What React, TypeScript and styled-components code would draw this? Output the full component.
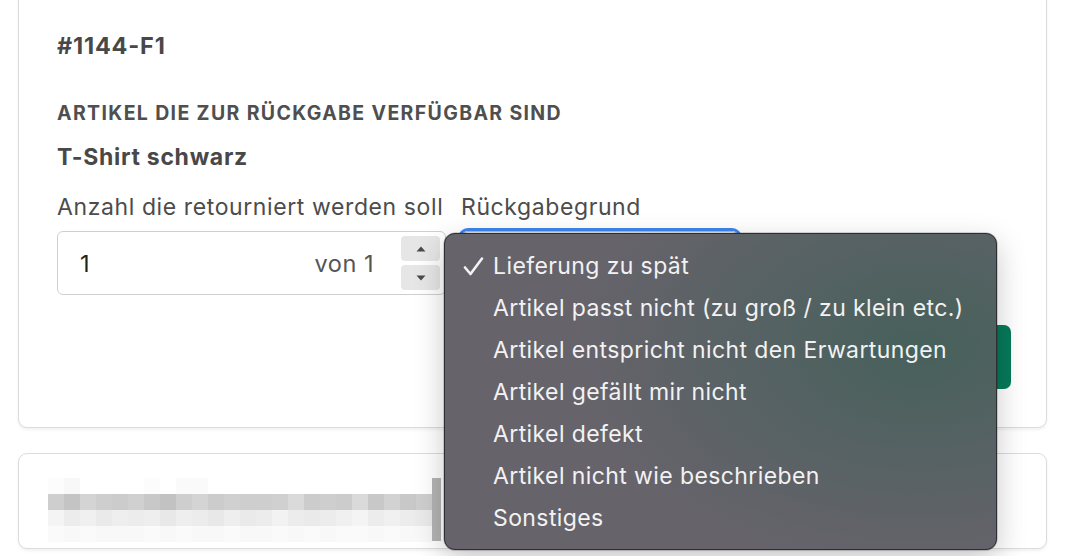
import React from "react";
import styled, { createGlobalStyle } from "styled-components";

const GlobalStyle = createGlobalStyle`
  html, body {
    margin: 0;
    padding: 0;
    background: #ffffff;
    overflow: hidden;
  }
  body {
    font-family: Inter, "Liberation Sans", Arial, sans-serif;
    color: #4a4a4a;
  }
`;

const Page = styled.div`
  width: 1090px;
  height: 568px;
  padding: 0 43px 0 18px;
  box-sizing: border-box;
  display: flex;
  flex-direction: column;
  gap: 25px;
  margin-top: -12px;
`;

const Card = styled.section`
  background: #ffffff;
  border: 1px solid #dcdcdc;
  border-radius: 9px;
  box-shadow: 0 2px 3px rgba(0, 0, 0, 0.06);
`;

const ReturnCard = styled(Card)`
  padding: 39px 35px 38px 38px;
`;

const OrderNumber = styled.h2`
  margin: 0;
  font-size: 23.5px;
  font-weight: 700;
  letter-spacing: 0.8px;
  color: #484848;
  line-height: 36px;
`;

const SectionTitle = styled.h3`
  margin: 37px 0 0;
  font-size: 19.5px;
  font-weight: 700;
  letter-spacing: 1.35px;
  text-transform: uppercase;
  color: #4f4f4f;
  line-height: 24px;
`;

const ItemName = styled.div`
  margin-top: 17px;
  font-size: 23px;
  font-weight: 700;
  letter-spacing: 0.7px;
  color: #484848;
  line-height: 30px;
`;

const FieldRow = styled.div`
  display: flex;
  gap: 15px;
  margin-top: 21px;
`;

const Field = styled.div<{ $width: number }>`
  width: ${({ $width }) => $width}px;
  display: flex;
  flex-direction: column;
  gap: 10px;
`;

const Label = styled.label`
  font-size: 23px;
  letter-spacing: 0.6px;
  color: #4c4c4c;
  line-height: 28px;
  white-space: nowrap;
`;

const NumberBox = styled.div`
  height: 64px;
  box-sizing: border-box;
  border: 1px solid #cfcfcf;
  border-radius: 6px;
  display: flex;
  align-items: center;
  padding: 0 5px 0 22px;
`;

const NumberValue = styled.span`
  flex: 1;
  font-size: 23.5px;
  color: #222222;
`;

const Suffix = styled.span`
  font-size: 23.5px;
  letter-spacing: 0.5px;
  color: #555555;
  margin-right: 27px;
`;

const Spinner = styled.div`
  display: flex;
  flex-direction: column;
  gap: 4px;
`;

const SpinButton = styled.span`
  width: 39px;
  height: 25px;
  border-radius: 4px;
  background: #e6e6e6;
  display: flex;
  align-items: center;
  justify-content: center;
  color: #4a4a4a;
`;

const SelectWrap = styled.div`
  position: relative;
`;

const SelectBox = styled.div`
  height: 64px;
  box-sizing: border-box;
  border: 1px solid #9bbcf0;
  border-radius: 7px;
  box-shadow: 0 0 0 3px #3d86ee;
`;

const Menu = styled.ul`
  position: absolute;
  left: -17px;
  top: 2px;
  width: 553px;
  margin: 0;
  padding: 11px 0 10px;
  list-style: none;
  box-sizing: border-box;
  border: 1px solid #2e2d31;
  border-radius: 11px;
  background:
    radial-gradient(ellipse 340px 220px at 86% 36%, rgba(64, 96, 88, 0.82), rgba(64, 96, 88, 0) 100%),
    #66636b;
  box-shadow: 0 10px 30px rgba(0, 0, 0, 0.22), 0 0 0 0.5px rgba(0, 0, 0, 0.3);
  z-index: 10;
`;

const MenuItem = styled.li`
  position: relative;
  padding-left: 48px;
  height: 42px;
  line-height: 42px;
  font-size: 23px;
  letter-spacing: 0.4px;
  color: #f2f2f3;
  white-space: nowrap;
`;

const Check = styled.svg`
  position: absolute;
  left: 18px;
  top: 12px;
`;

const Actions = styled.div`
  display: flex;
  justify-content: flex-end;
  margin-top: 30px;
`;

const SubmitButton = styled.button`
  width: 160px;
  height: 64px;
  border: none;
  border-radius: 7px;
  background: #067a5a;
`;

const OtherCard = styled(Card)`
  height: 96px;
  box-sizing: border-box;
  padding: 24px 0 0 29px;
`;

const Mosaic = styled.div`
  display: flex;
`;

const MosaicColumn = styled.div`
  display: flex;
  flex-direction: column;
`;

const MosaicCell = styled.span<{ $shade: number }>`
  width: 16px;
  height: 16px;
  background: ${({ $shade }) => `rgb(${$shade}, ${$shade}, ${$shade})`};
`;

const MosaicEdge = styled.span`
  width: 9px;
  height: 63px;
  background: #b4b4b4;
`;

const reasons = [
  "Lieferung zu spät",
  "Artikel passt nicht (zu groß / zu klein etc.)",
  "Artikel entspricht nicht den Erwartungen",
  "Artikel gefällt mir nicht",
  "Artikel defekt",
  "Artikel nicht wie beschrieben",
  "Sonstiges",
];

// greyscale blocks of the pixelated address line
const mosaicTop = [252, 248, 255, 255, 255, 255, 252, 255, 250, 250, 255, 255, 255, 255, 255, 255, 255, 255, 255, 255, 255, 255, 255, 255];
const mosaicMid = [206, 196, 212, 206, 204, 208, 200, 194, 206, 212, 204, 208, 206, 206, 208, 218, 204, 206, 204, 218, 200, 210, 200, 206];
const mosaicLow = [244, 236, 240, 234, 238, 236, 238, 232, 238, 236, 232, 238, 234, 236, 242, 236, 234, 236, 240, 244, 236, 240, 236, 234];
const mosaicBase = [250, 248, 250, 248, 248, 248, 250, 248, 250, 248, 248, 250, 248, 248, 250, 248, 250, 248, 250, 250, 248, 250, 248, 248];

const App: React.FC = () => (
  <>
    <GlobalStyle />
    <Page>
      <ReturnCard>
        <OrderNumber>#1144-F1</OrderNumber>
        <SectionTitle>Artikel die zur Rückgabe verfügbar sind</SectionTitle>
        <ItemName>T-Shirt schwarz</ItemName>

        <FieldRow>
          <Field $width={389}>
            <Label>Anzahl die retourniert werden soll</Label>
            <NumberBox>
              <NumberValue>1</NumberValue>
              <Suffix>von 1</Suffix>
              <Spinner>
                <SpinButton>
                  <svg width="10" height="6" viewBox="0 0 10 6">
                    <path d="M5 0.5 L9.5 5.5 H0.5 Z" fill="currentColor" />
                  </svg>
                </SpinButton>
                <SpinButton>
                  <svg width="10" height="6" viewBox="0 0 10 6">
                    <path d="M5 5.5 L9.5 0.5 H0.5 Z" fill="currentColor" />
                  </svg>
                </SpinButton>
              </Spinner>
            </NumberBox>
          </Field>

          <Field $width={278}>
            <Label>Rückgabegrund</Label>
            <SelectWrap>
              <SelectBox />
              <Menu>
                {reasons.map((reason, i) => (
                  <MenuItem key={reason}>
                    {i === 0 && (
                      <Check width="21" height="19" viewBox="0 0 21 19">
                        <path
                          d="M2 10.5 L7.5 17 L19 1.5"
                          fill="none"
                          stroke="#f2f2f3"
                          strokeWidth="2.6"
                          strokeLinecap="round"
                          strokeLinejoin="round"
                        />
                      </Check>
                    )}
                    {reason}
                  </MenuItem>
                ))}
              </Menu>
            </SelectWrap>
          </Field>
        </FieldRow>

        {/* submit sits under the open reason list */}
        <Actions>
          <SubmitButton aria-label="Weiter" />
        </Actions>
      </ReturnCard>

      <OtherCard>
        <Mosaic>
          {mosaicMid.map((shade, i) => (
            <MosaicColumn key={i}>
              <MosaicCell $shade={mosaicTop[i]} />
              <MosaicCell $shade={shade} />
              <MosaicCell $shade={mosaicLow[i]} />
              <MosaicCell $shade={mosaicBase[i]} />
            </MosaicColumn>
          ))}
          <MosaicEdge />
        </Mosaic>
      </OtherCard>
    </Page>
  </>
);

export default App;
